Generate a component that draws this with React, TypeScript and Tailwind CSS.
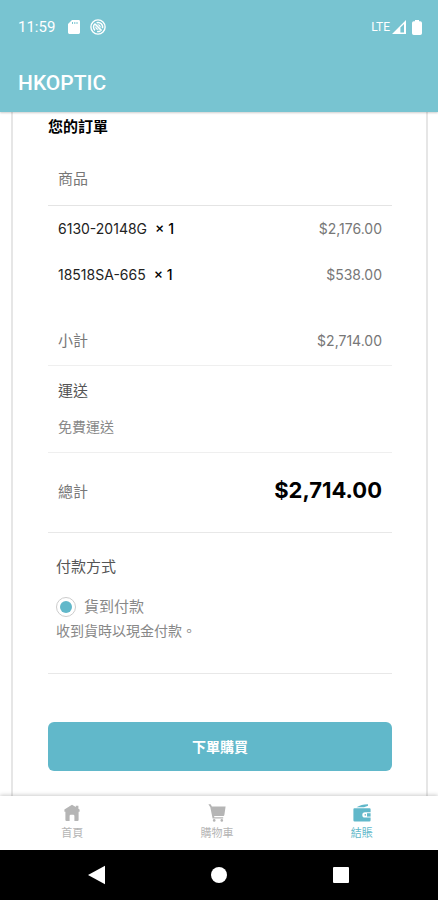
import React, { useState } from "react";
import clsx from "clsx";

interface OrderItem {
  name: string;
  quantity: number;
  price: string;
}

const ITEMS: OrderItem[] = [
  { name: "6130-20148G", quantity: 1, price: "$2,176.00" },
  { name: "18518SA-665", quantity: 1, price: "$538.00" },
];

const HomeIcon = () => (
  <svg viewBox="0 0 20 20" className="size-5" fill="currentColor">
    <path d="M10 1.8 2.4 6.6v2.2h1V17a1 1 0 0 0 1 1h3.2v-5a1.2 1.2 0 0 1 1.2-1.2h2.4a1.2 1.2 0 0 1 1.2 1.2v5h3.2a1 1 0 0 0 1-1V8.800h1V6.600l-1.200-.8V2.800h-2.600v1.300z" />
  </svg>
);

const CartIcon = () => (
  <svg viewBox="0 0 20 20" className="size-5" fill="currentColor">
    <path d="M1.400 1.200h2.200l1.300 2.300h13.700l-1.200 8.300c-.1.800-.7 1.300-1.400 1.300H7.200v1.200h9v1.100H5.600L3.300 4.200z" />
    <circle cx="7.200" cy="17.400" r="1.300" />
    <circle cx="14.800" cy="17.400" r="1.300" />
  </svg>
);

const WalletIcon = () => (
  <svg viewBox="0 0 20 20" className="size-5" fill="currentColor">
    <path d="M4.500 4.300C8 2.200 11 1.400 16 1.200v1.500l-4 1.600z" />
    <path d="M2.400 5.200h15.200a1 1 0 0 1 1 1v3H13a2.700 2.700 0 0 0 0 5.400h5.600v2.600a1.200 1.200 0 0 1-1.200 1.200H2.600a1.200 1.200 0 0 1-1.200-1.200v-11a1 1 0 0 1 1-1z" />
    <path d="M15 10.200h3.600v3.400H15z" />
    <circle cx="13.300" cy="11.900" r=".8" />
  </svg>
);

const TABS = [
  { id: "home", label: "首頁", icon: HomeIcon },
  { id: "cart", label: "購物車", icon: CartIcon },
  { id: "checkout", label: "結賬", icon: WalletIcon },
];

const StatusBar = () => (
  <div className="flex h-[54px] items-center pl-[18px] pr-4">
    <span className="text-[15px]">11:59</span>
    <svg viewBox="0 0 12 14" className="ml-[13px] h-[14px] w-3" fill="none">
      <path
        d="M4 0h6.600A1.400 1.400 0 0 1 12 1.400v11.200a1.400 1.400 0 0 1-1.400 1.400H1.400A1.400 1.400 0 0 1 0 12.600V4z"
        fill="#fff"
      />
      <path d="M4.500 2v2M6.800 2v2M9 2v2" stroke="#78c4d1" />
    </svg>
    <svg
      viewBox="0 0 16 16"
      className="ml-[10px] size-4"
      fill="none"
      stroke="#fff"
    >
      <circle cx="8" cy="8" r="7.100" strokeWidth="1.400" />
      <path
        d="M5 11.400A4.500 4.500 0 0 1 5 4.700M6.600 3.700a4.500 4.500 0 0 1 5.800 5.600M10.500 11.800a4.500 4.500 0 0 1-3.400.6"
        strokeWidth="1.500"
      />
      <path d="M4.800 4.800 11.600 11.600" strokeWidth="1.600" />
      <path d="M7.600 5.800a2.300 2.300 0 0 1 2.600 2.600M5.800 7.600a2.300 2.300 0 0 0 2.600 2.600" strokeWidth="1.200" />
    </svg>
    <span className="ml-auto text-xs">LTE</span>
    <svg viewBox="0 0 14 14" className="ml-[2px] size-[14px]">
      <path
        fillRule="evenodd"
        d="M0 14 14 0v14zM8.400 7.600V12.400H12V4z"
        fill="#fff"
      />
    </svg>
    <svg viewBox="0 0 10 15" className="ml-[6px] h-[15px] w-[10px]">
      <path
        d="M3 0h4v1.300h1.200A1.800 1.800 0 0 1 10 3.100v10.100A1.800 1.800 0 0 1 8.200 15H1.800A1.800 1.800 0 0 1 0 13.200V3.100a1.800 1.800 0 0 1 1.800-1.800H3z"
        fill="#fff"
      />
    </svg>
  </div>
);

const OrderTable = () => (
  <table className="w-full text-[15px] text-[#777]">
    <thead>
      <tr className="h-[51px] border-b border-[#e4e4e4]">
        <th colSpan={2} className="px-[10px] text-left font-normal">
          商品
        </th>
      </tr>
    </thead>
    <tbody className="text-[14px]">
      {ITEMS.map((item) => (
        <tr key={item.name} className="h-[46px]">
          <td className="pl-[10px] text-[#222]">
            {item.name}
            <strong className="ml-2 font-medium text-black">
              × {item.quantity}
            </strong>
          </td>
          <td className="pr-[10px] text-right">{item.price}</td>
        </tr>
      ))}
    </tbody>
    <tfoot>
      <tr className="h-[68px] border-b border-[#efefef]">
        <th className="pl-[10px] pt-5 text-left font-normal">小計</th>
        <td className="pr-[10px] pt-5 text-right text-[14px]">$2,714.00</td>
      </tr>
      <tr className="h-[87px] border-b border-[#efefef]">
        <td colSpan={2} className="px-[10px]">
          <p className="leading-9 text-[#555]">運送</p>
          <p className="text-[14px] leading-9 text-[#888]">免費運送</p>
        </td>
      </tr>
      <tr className="h-20 border-b border-[#e8e8e8]">
        <th className="pl-[10px] text-left font-normal">總計</th>
        <td className="pb-1 pr-[10px] text-right text-[22px] font-bold text-black">
          $2,714.00
        </td>
      </tr>
    </tfoot>
  </table>
);

const App: React.FC = () => {
  const [activeTab, setActiveTab] = useState("checkout");
  const [payment, setPayment] = useState("cod");

  return (
    <div className="flex min-h-screen flex-col bg-white font-['Inter','Noto_Sans_CJK_TC',sans-serif]">
      <header className="z-10 bg-[#78c4d1] font-['Roboto',sans-serif] text-white shadow-[0_1px_2px_rgba(0,0,0,0.2)]">
        <StatusBar />
        <h1 className="px-[18px] text-[21px] font-medium leading-[58px]">
          HKOPTIC
        </h1>
      </header>

      <main className="ml-[11px] mr-[10px] flex-1 border-x-2 border-[#e6e6e6] pb-6 pl-[35px] pr-[34px]">
        <h2 className="pb-3 text-[15px] font-bold leading-[30px] text-black">
          您的訂單
        </h2>
        <OrderTable />

        <section className="border-b border-[#e8e8e8] px-2 pb-8 pt-5">
          <h3 className="text-[15px] leading-7 text-[#555]">付款方式</h3>
          <label className="mt-3 flex items-center gap-2 text-[15px] leading-7 text-[#888]">
            <input
              type="radio"
              name="payment"
              value="cod"
              checked={payment === "cod"}
              onChange={(e) => setPayment(e.target.value)}
              className="size-5 appearance-none rounded-full border border-[#ccc] bg-white bg-clip-content p-[3px] checked:bg-[#61b8ca]"
            />
            貨到付款
          </label>
          <p className="text-[14px] leading-5 text-[#888]">
            收到貨時以現金付款。
          </p>
        </section>

        <button
          type="button"
          className="mt-12 h-[49px] w-full rounded-md bg-[#61b8ca] text-[14px] font-bold text-white"
        >
          下單購買
        </button>
      </main>

      <nav className="grid h-[54px] grid-cols-3 bg-white pr-1 shadow-[0_-1px_4px_rgba(0,0,0,0.2)]">
        {TABS.map(({ id, label, icon: Icon }) => (
          <button
            key={id}
            type="button"
            onClick={() => setActiveTab(id)}
            className={clsx(
              "flex flex-col items-center justify-center text-[11px] leading-5",
              activeTab === id ? "text-[#61b8ca]" : "text-[#b5b5b5]"
            )}
          >
            <Icon />
            {label}
          </button>
        ))}
      </nav>

      <div className="grid h-[50px] grid-cols-3 bg-black px-9">
        <button
          type="button"
          aria-label="Back"
          className="grid place-items-center"
        >
          <svg viewBox="0 0 20 20" className="size-5" fill="#fff">
            <path d="M1 10 18 .8v18.400z" />
          </svg>
        </button>
        <button
          type="button"
          aria-label="Home"
          className="grid place-items-center"
        >
          <span className="size-4 rounded-full bg-white" />
        </button>
        <button
          type="button"
          aria-label="Recents"
          className="grid place-items-center"
        >
          <span className="size-4 rounded-[1px] bg-white" />
        </button>
      </div>
    </div>
  );
};

export default App;
